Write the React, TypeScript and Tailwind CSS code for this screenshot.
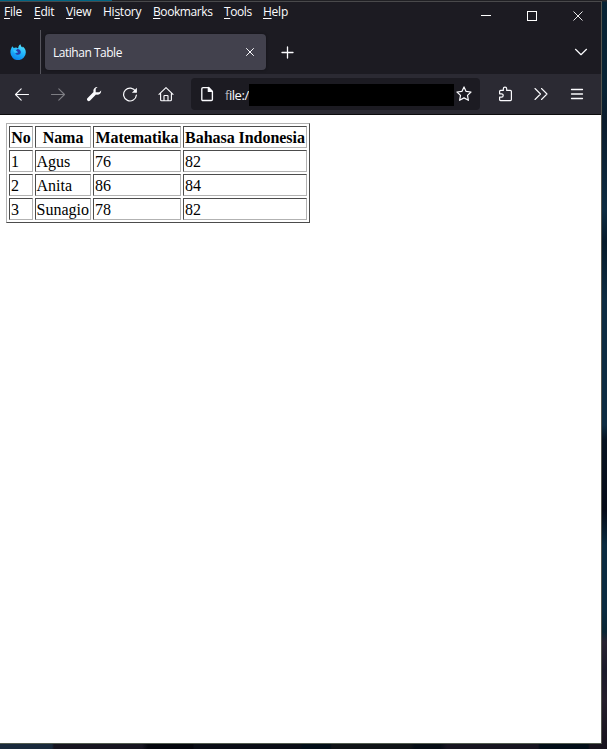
import React from "react";

const menus = [
  { key: "F", pre: "", post: "ile", cls: "w-[30px]" },
  { key: "E", pre: "", post: "dit", cls: "w-[32px]" },
  { key: "V", pre: "", post: "iew", cls: "w-[37px]" },
  { key: "s", pre: "Hi", post: "tory", cls: "w-[50px]" },
  { key: "B", pre: "", post: "ookmarks", cls: "w-[71px] tracking-[-0.42px]" },
  { key: "T", pre: "", post: "ools", cls: "w-[39px] tracking-[-0.42px]" },
  { key: "H", pre: "", post: "elp", cls: "w-[30px]" },
];

const rows = [
  ["1", "Agus", "76", "82"],
  ["2", "Anita", "86", "84"],
  ["3", "Sunagio", "78", "82"],
];

const cell = "h-[22px] border border-t-[#4c4c4c] border-l-[#4c4c4c] border-r-[#b2b2b2] border-b-[#b2b2b2] px-px pt-[2px] pb-0 leading-[18px]";

function Icon({ className = "", children }: { className?: string; children: React.ReactNode }) {
  return (
    <svg viewBox="0 0 16 16" fill="none" stroke="#fbfbfe" strokeWidth="1.2" strokeLinecap="round" strokeLinejoin="round" className={"size-4 shrink-0 " + className}>
      {children}
    </svg>
  );
}

function FirefoxLogo() {
  return (
    <svg viewBox="0 0 16 16" className="ml-[10px] mt-[14px] size-4 shrink-0">
      <defs>
        <linearGradient id="fox" x1="0.7" y1="0" x2="0.3" y2="1">
          <stop offset="0" stopColor="#54e4ff" />
          <stop offset="0.5" stopColor="#20b4fb" />
          <stop offset="1" stopColor="#0a80ee" />
        </linearGradient>
      </defs>
      <path d="M1.2 4.6 2.2 2.2l1.6 1.9c.8-.4 1.6-.6 2.6-.5.5.5 1.2.8 1.8.6C8.3 2.6 9 1.3 10.4.2c.3 1.5 1 2.5 2 3.3l.4-1c1.9 1.5 3 3.4 3 5.8a7.7 7.7 0 0 1-15.4.2c0-1.5.2-2.7.8-3.9Z" fill="url(#fox)" />
      <path d="M5.4 6.4c.9-.1 1.6-.6 2.2-1.3.8.3 1.6.3 2.3.9 1.2 1.2 1.2 2.9.2 4-1.5 1.4-4 .9-4.8-.8l2-.2.8-1Z" fill="#2b3bab" />
      <path d="m3 5.6 2.8.7 1.4 1.3-1.5 1.2L4 8.2Z" fill="#3bc4ff" />
    </svg>
  );
}

export default function App() {
  return (
    <div className="flex h-[749px] w-[607px] overflow-hidden bg-[#0b2637] font-['Open_Sans','Noto_Sans',sans-serif] text-[#fbfbfe]">
      <div className="flex w-[602px] flex-col">
        <div className="flex h-px shrink-0 bg-[#202024]"><div className="w-[112px] bg-[#006482]" /></div>
        <div className="flex h-[743px] flex-col border-t border-r border-b border-t-[#49494b] border-r-[#53554e] border-b-[#535d50] bg-white">
          <div className="flex h-[28px] shrink-0 bg-[#1c1b22]">
            <nav className="flex pl-1 pt-px text-[12px] leading-[18px] tracking-[-0.25px]">
              {menus.map((m) => (
                <span key={m.key} className={"whitespace-nowrap " + m.cls}>
                  {m.pre}<span className="underline decoration-1 underline-offset-2">{m.key}</span>{m.post}
                </span>
              ))}
            </nav>
            <svg viewBox="0 0 110 20" shapeRendering="crispEdges" stroke="#fff" fill="none" className="ml-auto mr-[12px] mt-[2px] h-5 w-[110px]">
              <path d="M2 11.5h10" />
              <rect x="48.5" y="7.5" width="9" height="9" />
              <path d="m94.5 7.5 9 9m0-9-9 9" shapeRendering="auto" strokeWidth="0.9" />
            </svg>
          </div>

          <div className="flex h-[44px] shrink-0 bg-[#1c1b22]">
            <FirefoxLogo />
            <div className="ml-[14px] w-px bg-[#55545c]" />
            <div className="ml-1 mt-1 flex h-9 w-[221px] items-center rounded bg-[#42414d] pl-2 pr-2 shadow-[0_0_3px_#0006]">
              <span className="pt-[2px] text-[12px] leading-[18px] tracking-[-0.48px]">Latihan Table</span>
              <Icon className="ml-auto"><path d="m4.5 4.5 7 7m0-7-7 7" strokeWidth="1" /></Icon>
            </div>
            <Icon className="ml-[14px] mt-[15px]"><path d="M7.5 2v11M2 7.5h11" strokeWidth="1.3" /></Icon>
            <Icon className="ml-auto mr-[12px] mt-[14px]"><path d="m2.5 5.3 5.5 5.4 5.5-5.4" /></Icon>
          </div>

          <div className="flex h-[41px] shrink-0 border-b border-[#0c0c0d] bg-[#2b2a33]">
            <div className="flex h-10 w-[191px] items-center gap-5 pl-[14px]">
              <Icon><path d="M14.5 8.5H1.5M7.2 2.8 1.5 8.5l5.7 5.7" strokeWidth="1.1" /></Icon>
              <Icon className="opacity-40"><path d="M1.5 8.5h13M8.8 2.8l5.7 5.7-5.7 5.7" strokeWidth="1.1" /></Icon>
              <Icon><path d="M15.2 4.5c.1 3-2.5 5-5.2 4.1l-6.1 6.1c-1.7 1.4-3.9-.8-2.5-2.5l6.1-6.1C6.8 3.2 8.6.7 11.6.9L9.7 2.8v3.4h3.5l2-1.7Z" fill="#fbfbfe" stroke="none" /></Icon>
              <Icon><path d="M13.7 5.6A6.4 6.4 0 1 0 14.4 9" /><path d="M14.9 1.8v5H9.9Z" fill="#fbfbfe" stroke="none" /></Icon>
              <Icon><path d="m1 8.3 7-6.6 7 6.6M2.6 7.5v6.2c0 .6.4 1 1 1h8.8c.6 0 1-.4 1-1V7.5M6 14.5V10c0-.3.2-.5.5-.5h3c.3 0 .5.2.5.5v4.5" strokeWidth="1.15" /></Icon>
            </div>
            <div className="mt-1 flex h-8 w-[289px] items-center rounded bg-[#1c1b22] pl-2">
              <Icon><path d="M4 1.6h5.6l3.8 3.8v8c0 .6-.5 1.1-1.1 1.1H4c-.7 0-1.2-.5-1.2-1.1V2.7c0-.6.5-1.1 1.2-1.1Z" strokeWidth="1.35" /><path d="M9.3 1.5v4h4Z" fill="#fbfbfe" /></Icon>
              <span className="ml-[10px] w-[24px] whitespace-nowrap pt-[2px] text-[13px] leading-5 tracking-[-0.45px]"><span className="text-[#b5b5bb]">f</span>ile:/</span>
              <div className="mt-[1px] h-[22px] w-[205px] shrink-0 bg-black" />
              <Icon className="ml-[2px]"><path d="m8 .9 2.1 4.5 4.9.6-3.5 3.4.9 4.9L8 11.9l-4.4 2.4.9-4.9L1 6l4.9-.6Z" /></Icon>
            </div>
            <div className="flex h-10 items-center pl-[17px]">
              <Icon><path d="M2.6 5.4c0-.6.4-1 1-1h2.7V2.9a1.7 1.7 0 0 1 3.4 0v1.5h3.7c.6 0 1 .4 1 1v8.2c0 .6-.4 1-1 1H3.6c-.6 0-1-.4-1-1v-2.4h1.9a1.7 1.7 0 0 0 0-3.4H2.6Z" /></Icon>
              <Icon className="ml-5"><path d="m2 2.5 5.5 5.5L2 13.5M8.5 2.5 14 8l-5.5 5.5" strokeWidth="1.1" /></Icon>
              <Icon className="ml-5"><path d="M2.5 3.5h11M2.5 8h11M2.5 12.5h11" strokeWidth="1.3" /></Icon>
            </div>
          </div>

          <main className="pl-[6px] pt-2 font-['Liberation_Serif',serif] text-base text-black">
            <table className="w-[304px] table-fixed border-separate border-spacing-[2px] border border-t-[#b2b2b2] border-l-[#b2b2b2] border-r-[#4c4c4c] border-b-[#4c4c4c]">
              <colgroup><col className="w-6" /><col className="w-14" /><col className="w-[88px]" /><col className="w-[124px]" /></colgroup>
              <thead><tr>{["No", "Nama", "Matematika", "Bahasa Indonesia"].map((h) => <th key={h} className={cell + " whitespace-nowrap text-center font-bold tracking-[-0.04px]"}>{h}</th>)}</tr></thead>
              <tbody>{rows.map((r) => <tr key={r[0]}>{r.map((v, i) => <td key={i} className={cell}><span className={i === 1 ? "-ml-[0.5px]" : ""}>{v}</span></td>)}</tr>)}</tbody>
            </table>
          </main>
        </div>
        <div className="h-[5px] bg-[linear-gradient(90deg,#192a3c_0_52px,#171520_54px_142px,#05060d_148px_193px,#0a0d16_194px_300px,#020e18_302px_330px,#101317_332px_410px,#060d15_415px_440px,#171520_447px_538px,#020e18_540px_588px,#17131d_590px)]" />
      </div>
      <div className="w-[5px] bg-[linear-gradient(180deg,#2b2a2c_0_1px,#082334_2px_90px,#0b1c2c_120px,#0d2c42_210px,#071b2b_242px,#0d2c42_300px_425px,#071321_440px,#060b18_510px,#0a2b40_545px_610px,#0a2634_632px,#282331_642px,#1b1b2b_670px,#251e2b_700px,#17131d_749px)]" />
    </div>
  );
}
